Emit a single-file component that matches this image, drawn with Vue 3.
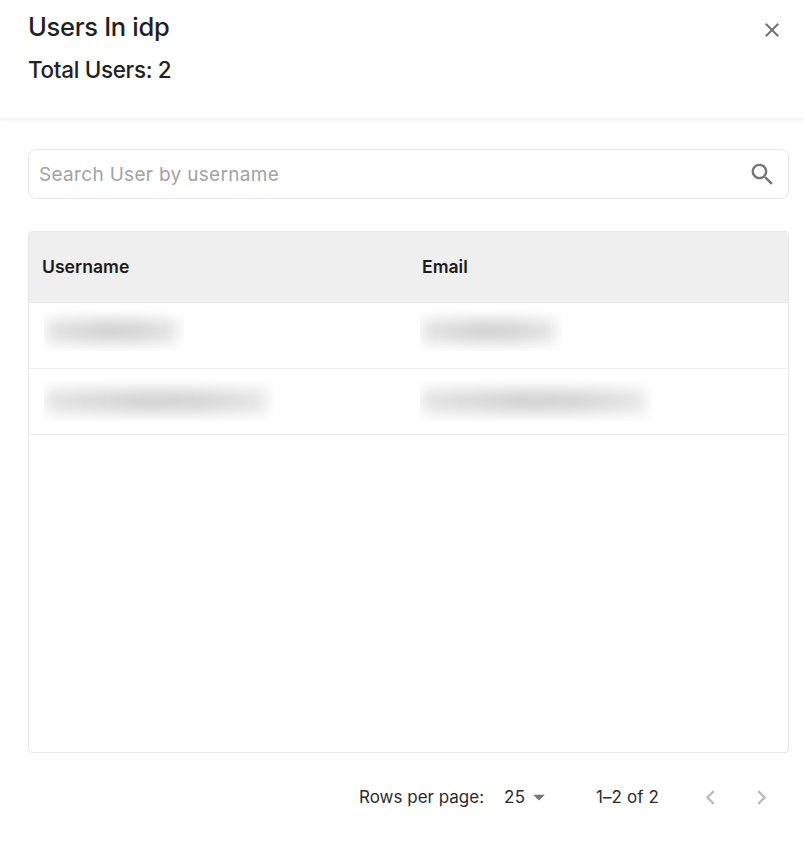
<script setup>
const columns = ['Username', 'Email']
const rows = [
  { user: 140, email: 142, top: 8 },
  { user: 230, email: 232, top: 12 }
]
</script>

<template>
  <div class="dialog">
    <header class="head">
      <div>
        <h1 class="title">Users In idp</h1>
        <p class="total">Total Users: 2</p>
      </div>
      <button class="close" aria-label="Close">
        <svg viewBox="0 0 24 24" width="24" height="24"><path d="M19 6.41 17.59 5 12 10.59 6.41 5 5 6.41 10.59 12 5 17.59 6.41 19 12 13.41 17.59 19 19 17.59 13.41 12z"/></svg>
      </button>
    </header>
    <main class="body">
      <div class="search">
        <span class="placeholder">Search User by username</span>
        <svg viewBox="0 0 24 24" width="29" height="29"><path d="M15.5 14h-.79l-.28-.27C15.41 12.59 16 11.11 16 9.5 16 5.91 13.09 3 9.5 3S3 5.91 3 9.5 5.91 16 9.5 16c1.61 0 3.09-.59 4.23-1.57l.27.28v.79l5 4.99L20.49 19l-4.99-5zm-6 0C7.01 14 5 11.99 5 9.5S7.01 5 9.5 5 14 7.01 14 9.5 11.99 14 9.5 14z"/></svg>
      </div>
      <section class="table">
        <div class="row header-row">
          <div v-for="c in columns" :key="c" class="cell">{{ c }}</div>
        </div>
        <div v-for="(r, i) in rows" :key="i" class="row data-row">
          <div class="cell">
            <div class="clip user-clip" :style="{ width: r.user + 'px', marginTop: r.top + 'px' }"><span class="blur"></span></div>
          </div>
          <div class="cell">
            <div class="clip email-clip" :style="{ width: r.email + 'px', marginTop: r.top + 'px' }"><span class="blur"></span></div>
          </div>
        </div>
      </section>
      <footer class="pager">
        <span class="rows-label">Rows per page:</span>
        <span class="rows-select">25<svg viewBox="0 0 24 24" width="28" height="28"><path d="m7 10 5 5 5-5z"/></svg></span>
        <span class="range">1–2 of 2</span>
        <span class="nav">
          <svg viewBox="0 0 24 24" width="29" height="29"><path d="M15.41 7.41 14 6l-6 6 6 6 1.41-1.41L10.83 12z"/></svg>
          <svg viewBox="0 0 24 24" width="29" height="29"><path d="M10 6 8.59 7.41 13.17 12l-4.58 4.59L10 18l6-6z"/></svg>
        </span>
      </footer>
    </main>
  </div>
</template>

<style>
html, body { margin: 0; background: #fff; }
</style>

<style scoped>
.dialog {
  width: 804px;
  height: 853px;
  font-family: "Inter", "Liberation Sans", sans-serif;
  color: #212121;
  background: #fff;
  overflow: hidden;
}
.head {
  height: 119px;
  box-sizing: border-box;
  padding: 11px 20px 0 28px;
  display: flex;
  justify-content: space-between;
  align-items: flex-start;
  box-shadow: 0 2px 3px rgba(0, 0, 0, 0.05);
  border-bottom: 1px solid #f3f3f3;
}
.title {
  margin: 0;
  font-size: 25.5px;
  line-height: 32px;
  font-weight: 450;
  letter-spacing: -0.3px;
}
.total {
  margin: 11px 0 0;
  font-size: 22.4px;
  line-height: 32px;
  font-weight: 450;
  letter-spacing: -0.3px;
}
.close {
  margin: 7px 0 0;
  padding: 0;
  border: 0;
  background: none;
  width: 24px;
  height: 24px;
  fill: #757575;
}
.body {
  padding: 30px 15px 0 28px;
}
.search {
  height: 50px;
  box-sizing: border-box;
  border: 1px solid #e8e8e8;
  border-radius: 8px;
  padding: 0 11px 0 10px;
  display: flex;
  align-items: center;
  justify-content: space-between;
  fill: #757575;
}
.placeholder {
  font-size: 19px;
  color: #a3a3a3;
  letter-spacing: 0.32px;
}
.table {
  margin-top: 32px;
  height: 522px;
  box-sizing: border-box;
  border: 1px solid #e8e8e8;
  border-radius: 4px;
  overflow: hidden;
}
.row {
  display: grid;
  grid-template-columns: 380px 1fr;
}
.header-row {
  height: 71px;
  padding-bottom: 2px;
  background: #efefef;
  border-bottom: 1px solid #e4e4e4;
  box-sizing: border-box;
  align-items: center;
  font-size: 17.6px;
  font-weight: 600;
  color: #1c1c1c;
}
.header-row .cell {
  padding-left: 13px;
}
.data-row {
  height: 66px;
  box-sizing: border-box;
  border-bottom: 1px solid #eeeeee;
}
.data-row .cell {
  padding-left: 15px;
}
.clip {
  height: 40px;
  overflow: hidden;
  position: relative;
}
.email-clip {
  margin-left: -4px;
}
.blur {
  display: block;
  position: absolute;
  left: 2px;
  right: 6px;
  top: 8px;
  height: 24px;
  background: linear-gradient(90deg, #e4e4e4, #d2d2d2 45%, #d6d6d6 70%, #e8e8e8);
  filter: blur(7px);
}
.pager {
  height: 88px;
  display: flex;
  align-items: center;
  padding: 0 0 0 331px;
  font-size: 17px;
  color: #2b2b2b;
}
.rows-label { width: 145px; }
.rows-select {
  display: flex;
  align-items: center;
  width: 92px;
  letter-spacing: 0.5px;
}
.rows-select svg { fill: #757575; margin-left: -1px; }
.range { width: 100px; letter-spacing: 0.1px; }
.nav {
  display: flex;
  gap: 22px;
  fill: #bdbdbd;
}
</style>
